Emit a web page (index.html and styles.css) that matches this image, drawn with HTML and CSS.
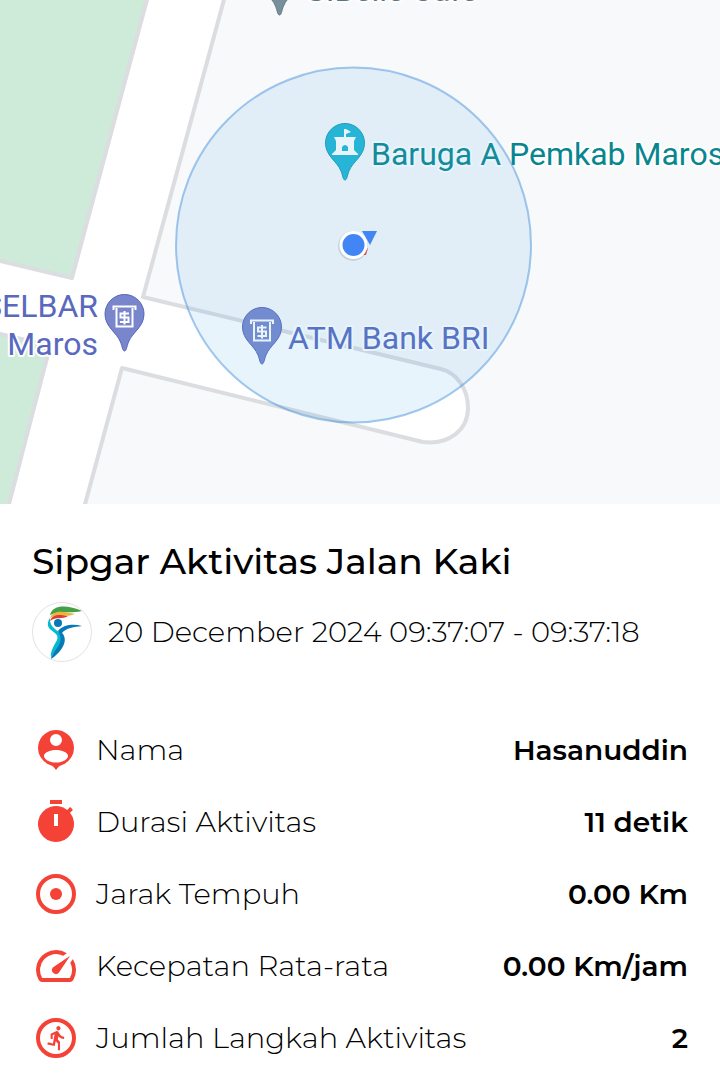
FILE: index.html
```html
<!DOCTYPE html>
<html lang="id">
<head>
<meta charset="utf-8">
<meta name="viewport" content="width=device-width, initial-scale=1">
<title>Sipgar Aktivitas Jalan Kaki</title>
<link rel="stylesheet" href="styles.css">
</head>
<body>
<main class="page">
  <svg class="map" viewBox="0 0 720 504" role="img" aria-label="Peta lokasi aktivitas">
    <defs>
      <path id="pin" d="M0 33C-2 33-2 29-4 24C-8 14-19.500 9-19.500-4A19.500 19.500 0 0 1 19.500-4C19.500 9 8 14 4 24C2 29 2 33 0 33Z"/>
      <g id="atm">
        <path d="M-11-11V-14.500H11V-11M-8-13V5.500H8V-13" fill="none" stroke="#fff" stroke-width="2"/>
        <path d="M4.500-7.500H-4V-3.500H4V1H-4.500M0-10V3.500" fill="none" stroke="#fff" stroke-width="2"/>
      </g>
    </defs>
    <rect class="land" width="720" height="504"/>
    <g class="edge">
      <path class="park" d="M-4-4H148L72 278L-4 260Z"/>
      <path class="road" d="M148-4H225L143 297L441 369C457 373 468 389 468 408C468 430 449 445 423 442L122 368L84 508H7L50 346L-4 333V260L72 278Z"/>
      <path class="park" d="M-4 333L50 346L8 508H-4Z"/>
    </g>
    <use href="#pin" class="pin-slate" x="279.500" y="-18"/>
    <text class="label slate" x="304" y="1">GIBelle Cafe</text>
    <use href="#pin" class="pin-teal" x="345" y="147"/>
    <path fill="#fff" d="M344 129H346L351 132L346 134V137H356L354 141V150L358 154V155H332V154L336 150V141L334 137H344ZM342 151H348V147Q345 143 342 147Z"/>
    <text class="label teal" x="371" y="165">Baruga A Pemkab Maros</text>
    <use href="#pin" class="pin-indigo" x="124.500" y="318"/>
    <use href="#atm" x="124.500" y="321"/>
    <text class="label indigo" x="98" y="317" text-anchor="end">SULSELBAR</text>
    <text class="label indigo" x="98" y="355" text-anchor="end">Maros</text>
    <use href="#pin" class="pin-indigo" x="262" y="331"/>
    <use href="#atm" x="262" y="335"/>
    <text class="label indigo" x="288" y="349">ATM Bank BRI</text>
    <circle class="accuracy" cx="353.500" cy="245" r="177.500"/>
    <path fill="#4285f4" d="M362 231L377 231L370 245Z"/>
    <path fill="#df5452" d="M368 248L366 255L361 255Z"/>
    <circle class="halo" cx="353" cy="246" r="15"/>
    <circle class="dot" cx="353.500" cy="245" r="12.500"/>
  </svg>

  <section class="details">
    <h1 class="title">Sipgar Aktivitas Jalan Kaki</h1>
    <div class="when">
      <svg class="logo" viewBox="0 0 60 60" aria-hidden="true">
        <circle cx="30" cy="30" r="29.500" fill="#fff" stroke="#e2e2e2"/>
        <path fill="#43a047" d="M18 13C21 2 36 3 50 9C38 12 28 8 18 13Z"/>
        <path fill="#efb23a" d="M18 16C22 7 33 10 43 12C34 16 25 11 18 16Z"/>
        <path fill="#df3c36" d="M18 19C21 11 28 13 36 14C30 18 24 14 18 19Z"/>
        <path fill="#08b8d1" d="M18 16C15 20 15 25 19 28C23 31 27 33 25 38C22 44 18 49 19 56C21 50 31 44 31 36C31 29 17 28 18 16Z"/>
        <circle cx="26" cy="21" r="4" fill="#0879b7"/>
        <path fill="#0879b7" d="M26 29C32 22 42 22 50 24C42 25 34 26 30 31C37 38 30 50 19 57C21 48 34 41 26 29Z"/>
      </svg>
      <time>20 December 2024 09:37:07 - 09:37:18</time>
    </div>

    <dl class="stats">
      <div class="row">
        <dt><svg class="icon" viewBox="0 0 24 24" aria-hidden="true"><path fill-rule="evenodd" d="M12 2a9 9 0 0 0-3 17.480C10.500 20 11 20.500 12 22C13 20.500 13.500 20 15 19.480A9 9 0 0 0 12 2ZM12 4a3 3 0 1 1 0 6 3 3 0 0 1 0-6ZM12 18.300C8.500 18.300 6 16.500 6 15C6 13.200 9 12 12 12S18 13.200 18 15C18 16.500 15.500 18.300 12 18.300Z"/></svg>Nama</dt>
        <dd>Hasanuddin</dd>
      </div>
      <div class="row">
        <dt><svg class="icon" viewBox="0 0 24 24" aria-hidden="true"><path fill-rule="evenodd" d="M9 1H15V3H9ZM19.030 7.390L20.450 5.970C20 5.460 19.550 5 19.040 4.560L17.620 5.980A9 9 0 1 0 19.030 7.390ZM13 14H11V8H13Z"/></svg>Durasi Aktivitas</dt>
        <dd>11 detik</dd>
      </div>
      <div class="row">
        <dt><svg class="icon" viewBox="0 0 24 24" aria-hidden="true"><circle class="ring" cx="12" cy="12" r="9"/><circle cx="12" cy="12" r="3"/></svg>Jarak Tempuh</dt>
        <dd>0.00 Km</dd>
      </div>
      <div class="row">
        <dt><svg class="icon" viewBox="0 0 24 24" aria-hidden="true"><path d="M20.380 8.570l-1.230 1.850a8 8 0 0 1-.22 7.580H5.070A8 8 0 0 1 15.580 6.850l1.850-1.230A10 10 0 0 0 3.350 19a2 2 0 0 0 1.720 1h13.850a2 2 0 0 0 1.740-1 10 10 0 0 0-.27-10.440zm-9.790 6.840a2 2 0 0 0 2.830 0l5.660-8.490-8.490 5.660a2 2 0 0 0 0 2.830z"/></svg>Kecepatan Rata-rata</dt>
        <dd>0.00 Km/jam</dd>
      </div>
      <div class="row">
        <dt><svg class="icon" viewBox="0 0 24 24" aria-hidden="true"><circle class="ring" cx="12" cy="12" r="9"/><path transform="translate(6.200 5.200) scale(.52 .56)" d="M13.490 5.480c1.100 0 2-.9 2-2s-.9-2-2-2-2 .9-2 2 .9 2 2 2zm-3.600 13.900l1-4.400 2.100 2v6h2v-7.500l-2.100-2 .6-3c1.300 1.500 3.300 2.500 5.500 2.500v-2c-1.900 0-3.500-1-4.300-2.400l-1-1.600c-.4-.6-1-1-1.700-1-.3 0-.5.1-.8.1l-5.200 2.200v4.700h2v-3.400l1.800-.7-1.600 8.100-4.900-1-.4 2 7 1.400z"/></svg>Jumlah Langkah Aktivitas</dt>
        <dd>2</dd>
      </div>
    </dl>
  </section>
</main>
</body>
</html>
```
FILE: styles.css
```css
* { box-sizing: border-box; }

body {
  margin: 0;
  background: #fff;
  color: #000;
  font-family: Montserrat, Inter, "Open Sans", sans-serif;
  font-size: 28px;
}

.map {
  display: block;
  width: 100%;
  height: auto;
}

.land { fill: #f8f9fb; }
.edge { stroke: #dcdde1; stroke-width: 4; stroke-linejoin: round; }
.park { fill: #ceead9; }
.road { fill: #fff; }

.label {
  font-family: Roboto, sans-serif;
  font-size: 32px;
  stroke: #fff;
  stroke-width: 4;
  stroke-linejoin: round;
  paint-order: stroke;
}
.slate { fill: #5b7482; }
.teal { fill: #078690; }
.indigo { fill: #5969be; }

.pin-slate { fill: #78909c; stroke: #5f7886; }
.pin-teal { fill: #20b6d4; stroke: #179bad; }
.pin-indigo { fill: #7986cb; stroke: #5365be; }

.accuracy {
  fill: rgba(84, 180, 232, 0.14);
  stroke: rgba(74, 148, 220, 0.5);
  stroke-width: 2;
}
.halo { fill: rgba(60, 80, 100, 0.16); }
.dot { fill: #4285f4; stroke: #fff; stroke-width: 3; }

.details { padding: 36px 32px 8px; }

.title {
  margin: 0;
  font-size: 36px;
  font-weight: 550;
  line-height: 42px;
}

.when {
  display: flex;
  align-items: center;
  gap: 16px;
  margin-top: 20px;
  font-weight: 300;
  font-size: 29px;
  line-height: 34px;
}
.logo { width: 60px; height: 60px; flex: none; }

.stats {
  display: flex;
  flex-direction: column;
  gap: 24px;
  margin: 64px 0 0;
}
.row {
  display: flex;
  justify-content: space-between;
  align-items: center;
  gap: 16px;
}
.row dt {
  display: flex;
  align-items: center;
  gap: 16px;
  font-size: 29px;
  font-weight: 300;
  line-height: 34px;
}
.row dd { margin: 0; font-weight: 600; }

.icon {
  width: 48px;
  height: 48px;
  flex: none;
  fill: #f44336;
}
.ring { fill: none; stroke: #f44336; stroke-width: 2; }
```
